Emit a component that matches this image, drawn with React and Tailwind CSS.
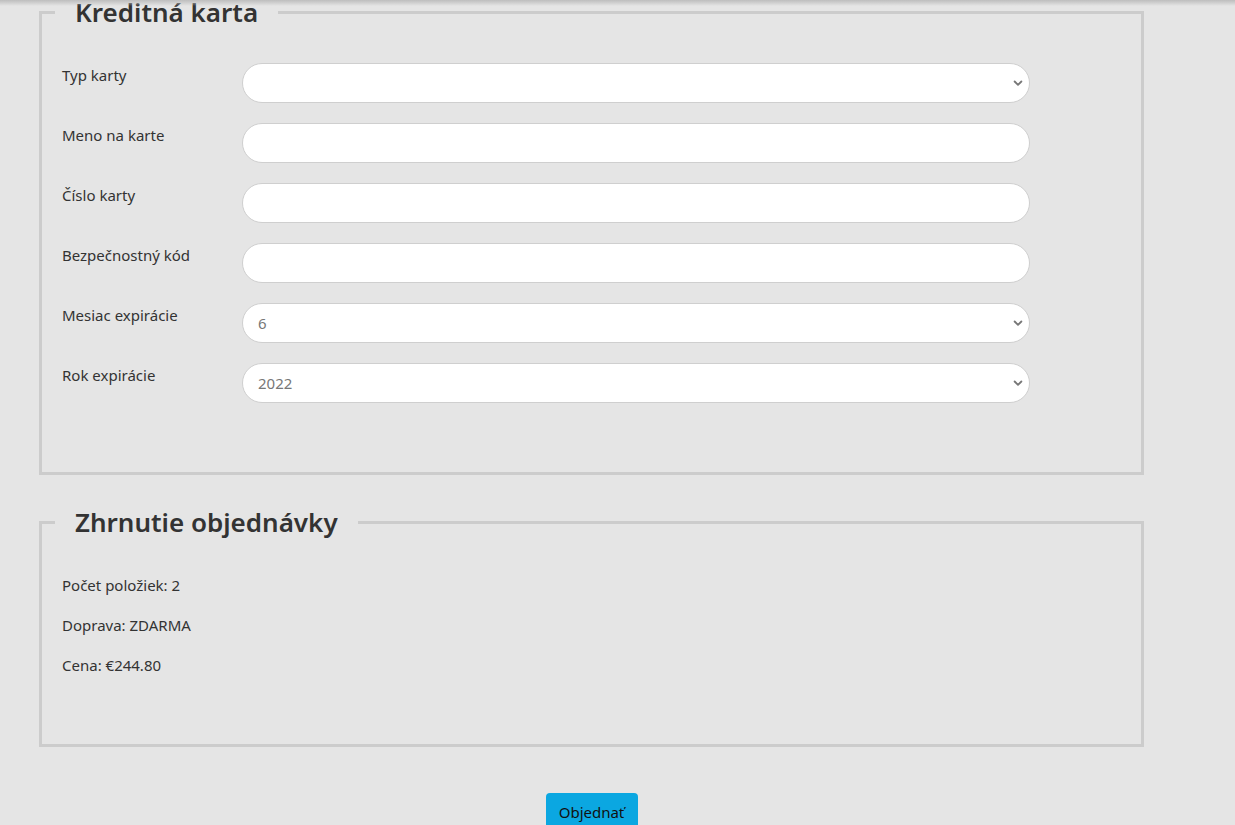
import React from "react";

const font = { fontFamily: '"Noto Sans", "Open Sans", sans-serif' };

function Chevron() {
  return (
    <svg
      className="pointer-events-none absolute right-[6px] top-1/2 -translate-y-1/2"
      width="12"
      height="12"
      viewBox="0 0 16 16"
      fill="none"
      stroke="#777"
      strokeWidth="2.4"
      strokeLinecap="round"
      strokeLinejoin="round"
    >
      <path d="M3.5 6l4.5 4.5L12.5 6" />
    </svg>
  );
}

function Row({ label, children }) {
  return (
    <div className="flex items-start">
      <label className="w-[180px] shrink-0 pt-[1px] text-[15px] leading-[22px] text-[#333]">
        {label}
      </label>
      <div className="relative w-[788px]">{children}</div>
    </div>
  );
}

const inputCls =
  "h-[40px] w-full rounded-full border border-[#cfcfcf] bg-white px-[15px] text-[15px] text-[#777] outline-none appearance-none";

function TextField({ label }) {
  return (
    <Row label={label}>
      <input type="text" className={inputCls} />
    </Row>
  );
}

function SelectField({ label, value, options }) {
  return (
    <Row label={label}>
      <select className={inputCls} defaultValue={value}>
        {options.map((o) => (
          <option key={o} value={o}>
            {o}
          </option>
        ))}
      </select>
      <Chevron />
    </Row>
  );
}

export default function App() {
  const months = ["", "1", "2", "3", "4", "5", "6", "7", "8", "9", "10", "11", "12"];
  const years = ["2022", "2023", "2024", "2025", "2026", "2027"];

  return (
    <div className="relative min-h-[825px] bg-[#e5e5e5]" style={font}>
      {/* tieň z hlavičky nad stránkou */}
      <div className="pointer-events-none absolute left-0 right-0 top-0 z-10 h-[6px] bg-gradient-to-b from-[#bdbdbd] to-transparent" />

      <div className="ml-[39px] w-[1105px]">
        {/* Kreditná karta */}
        <fieldset className="border-[3px] border-[#cccccc] pl-[13px] pb-[69px]">
          <legend className="px-5 text-[26px] leading-[24px] font-semibold text-[#333]">
            Kreditná karta
          </legend>
          <div className="flex flex-col gap-[20px] pl-[7px] pt-[39px]">
            <SelectField label="Typ karty" value="" options={["", "Visa", "MasterCard"]} />
            <TextField label="Meno na karte" />
            <TextField label="Číslo karty" />
            <TextField label="Bezpečnostný kód" />
            <SelectField label="Mesiac expirácie" value="6" options={months} />
            <SelectField label="Rok expirácie" value="2022" options={years} />
          </div>
        </fieldset>

        {/* Zhrnutie objednávky */}
        <fieldset className="mt-[35px] border-[3px] border-[#cccccc] pl-[13px] pb-[68px]">
          <legend className="px-5 text-[26px] leading-[24px] font-semibold text-[#333]">
            Zhrnutie objednávky
          </legend>
          <div className="flex flex-col gap-[18px] pl-[7px] pt-[40px] text-[15px] leading-[22px] text-[#333]">
            <p>Počet položiek: 2</p>
            <p>Doprava: ZDARMA</p>
            <p>Cena: €244.80</p>
          </div>
        </fieldset>

        <div className="flex justify-center pt-[46px]">
          <button className="h-[38px] w-[92px] rounded-[4px] bg-[#0ba7e1] text-[15px] text-[#111]">
            Objednať
          </button>
        </div>
      </div>
    </div>
  );
}
